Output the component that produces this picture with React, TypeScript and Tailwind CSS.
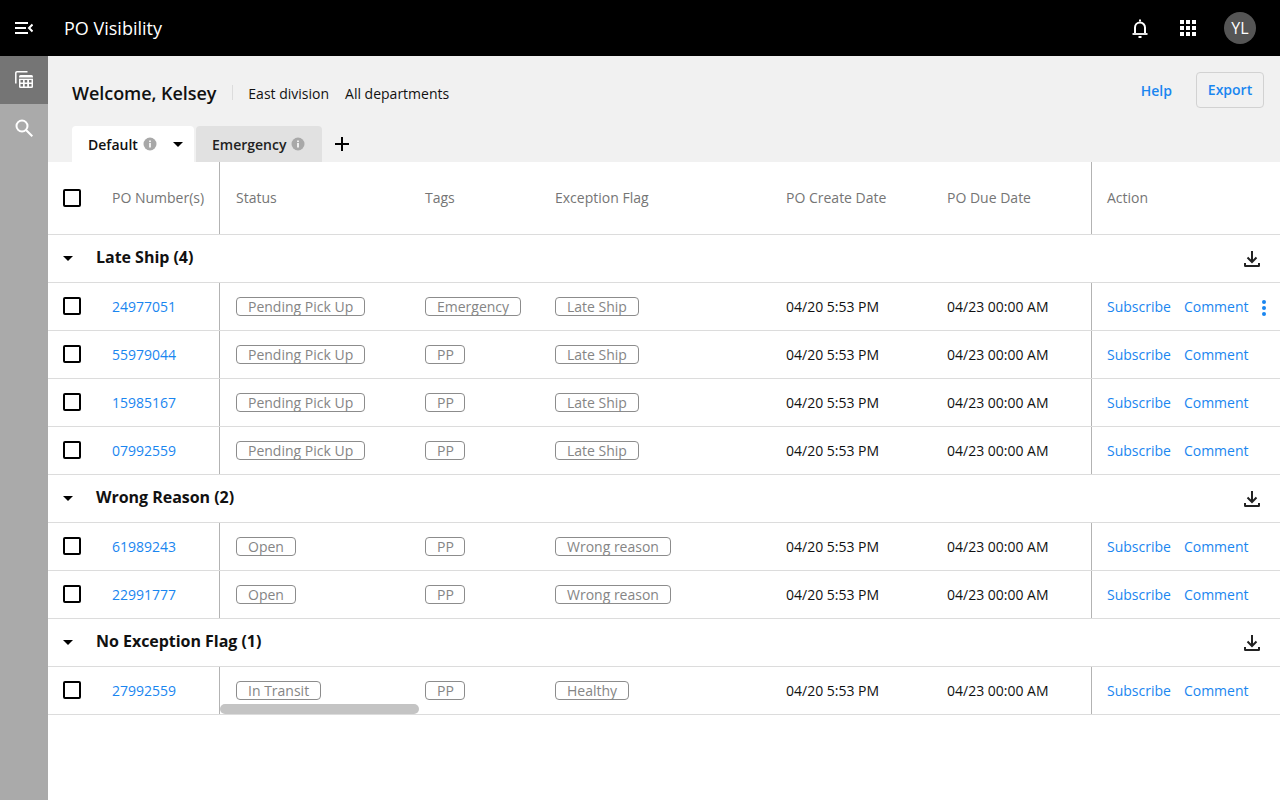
import React from "react";

const cols = "grid grid-cols-[172px_189px_130px_231px_161px_160px_189px]";

function Check({ up }: { up?: boolean }) {
  return <span className={`block w-[18px] h-[18px] border-2 border-black rounded-[2px] bg-white ${up ? "mb-px" : ""}`} />;
}

function Caret({ className = "" }: { className?: string }) {
  return (
    <svg width="10" height="5" viewBox="0 0 10 5" className={className}>
      <path d="M0 0h10L5 5z" fill="#000" />
    </svg>
  );
}

function Info() {
  return (
    <svg width="14" height="14" viewBox="0 0 14 14" className="ml-[5px]">
      <circle cx="7" cy="7" r="6.5" fill="#a8a8a8" />
      <rect x="6.2" y="6" width="1.6" height="4.5" fill="#fff" />
      <rect x="6.2" y="3.5" width="1.6" height="1.6" fill="#fff" />
    </svg>
  );
}

function Download() {
  return (
    <svg width="24" height="24" viewBox="0 0 24 24" fill="none" stroke="#222" strokeWidth="2">
      <path d="M12 4v10.500" />
      <path d="M7.500 10.500 12 15l4.500-4.500" />
      <path d="M5 16v2.800a.200.200 0 0 0 .200.200h13.600a.200.200 0 0 0 .200-.200V16" />
    </svg>
  );
}

function Tag({ children }: { children: React.ReactNode }) {
  return (
    <span className="inline-flex h-[19px] items-center pl-[11px] pr-[10.6px] rounded-[4px] border border-[#8c8c8c] text-[14px] text-[#858585] leading-none whitespace-nowrap">
      {children}
    </span>
  );
}

type Row = { po: string; status: string; tag: string; flag: string; menu?: boolean };

function DataRow({ po, status, tag, flag, menu }: Row) {
  return (
    <div className={`${cols} h-[48px] border-b border-[#dcdcdc] text-[14px] items-stretch`}>
      <div className="flex items-center border-r border-[#b3b3b3]">
        <span className="ml-[15px]"><Check up /></span>
        <a className="ml-[31px] text-[#1a86f0]">{po}</a>
      </div>
      <div className="flex items-center pl-4"><Tag>{status}</Tag></div>
      <div className="flex items-center pl-4"><Tag>{tag}</Tag></div>
      <div className="flex items-center pl-4"><Tag>{flag}</Tag></div>
      <div className="flex items-center pl-4 text-[#111]">04/20 5:53 PM</div>
      <div className="flex items-center pl-4 text-[#111]">04/23 00:00 AM</div>
      <div className="relative flex items-center border-l border-[#b3b3b3] pl-[15px] text-[#1a86f0] gap-[13px]">
        <span>Subscribe</span>
        <span>Comment</span>
        {menu && (
          <span className="absolute right-[14px] top-[17px] flex flex-col gap-[2px]">
            <span className="w-1 h-1 rounded-full bg-[#1a86f0]" />
            <span className="w-1 h-1 rounded-full bg-[#1a86f0]" />
            <span className="w-1 h-1 rounded-full bg-[#1a86f0]" />
          </span>
        )}
      </div>
    </div>
  );
}

function Group({ title }: { title: string }) {
  return (
    <div className="flex h-[48px] items-center border-b border-[#dcdcdc]">
      <Caret className="ml-[15px] mb-px" />
      <span className="ml-[23px] mb-1 text-[16px] font-bold text-[#111] tracking-[-0.03px]">{title}</span>
      <span className="ml-auto mr-4 flex"><Download /></span>
    </div>
  );
}

const Header = ({ children }: { children: React.ReactNode }) => (
  <div className="flex items-center pl-4 pb-[2px] text-[14px] text-[#757575]">{children}</div>
);

export default function App() {
  return (
    <div className="w-[1280px] h-[800px] overflow-hidden flex flex-col bg-white font-['Open_Sans',sans-serif]">
      <header className="h-14 shrink-0 bg-black flex items-center text-white">
        <div className="w-12 flex justify-center">
          <svg width="18" height="12" viewBox="0 0 18 12" fill="none" stroke="#fff" strokeWidth="2">
            <path d="M0 1h13M0 6h11M0 11h13" />
            <path d="M17.500 2.500 14 6l3.500 3.500" />
          </svg>
        </div>
        <div className="ml-4 text-[18px]">PO Visibility</div>
        <div className="ml-auto flex items-center">
          <svg width="16" height="19" viewBox="0 0 16 19" fill="none" stroke="#fff" strokeWidth="2">
            <path d="M3 14V8.500a5 5 0 0 1 10 0V14" />
            <path d="M.5 15h15" strokeWidth="1.800" />
            <path d="M8 .5v2" />
            <path d="M6.500 18h3" />
          </svg>
          <div className="ml-8 grid grid-cols-3 gap-[2px]">
            {Array.from({ length: 9 }).map((_, i) => (
              <span key={i} className="w-1 h-1 bg-white" />
            ))}
          </div>
          <div className="ml-7 mr-6 w-8 h-8 rounded-full bg-[#555] flex items-center justify-center text-[16px]">YL</div>
        </div>
      </header>
      <div className="flex flex-1 min-h-0">
        <aside className="w-12 shrink-0 bg-[#aaaaaa]">
          <div className="h-12 bg-[#757575] flex items-center justify-center">
            <svg width="18" height="17" viewBox="0 0 18 17" fill="none" className="mb-px">
              <path d="M.8 12.500V2A1.200 1.200 0 0 1 2 .8h10.500" stroke="#fff" strokeWidth="1.500" />
              <rect x="4" y="4" width="14" height="13" rx="1.500" fill="#fff" />
              <g fill="#757575">
                <rect x="4" y="6.500" width="14" height="1.200" />
                <rect x="5.500" y="9" width="2.500" height="2.500" />
                <rect x="9.700" y="9" width="2.500" height="2.500" />
                <rect x="14" y="9" width="2.500" height="2.500" />
                <rect x="5.500" y="13" width="2.500" height="2.500" />
                <rect x="9.700" y="13" width="2.500" height="2.500" />
                <rect x="14" y="13" width="2.500" height="2.500" />
              </g>
            </svg>
          </div>
          <div className="h-12 flex items-center justify-center">
            <svg width="18" height="18" viewBox="0 0 18 18" fill="none" stroke="#fff" strokeWidth="2">
              <circle cx="7" cy="7" r="5.500" />
              <path d="m10.800 10.800 6.500 6.500" />
            </svg>
          </div>
        </aside>
        <main className="flex-1 min-w-0 flex flex-col">
          <div className="h-[106px] shrink-0 bg-[#f1f1f1] flex flex-col">
            <div className="h-[70px] flex items-start">
              <div className="ml-6 mt-[23px] text-[18px] font-semibold text-[#111] leading-[28px] whitespace-nowrap tracking-[-0.05px]">Welcome, Kelsey</div>
              <span className="ml-4 mt-[29px] w-px h-[15px] bg-[#dcdcdc]" />
              <div className="ml-[15px] mt-[28px] text-[14px] text-[#111] leading-5">East division</div>
              <div className="ml-4 mt-[28px] text-[14px] text-[#111] leading-5">All departments</div>
              <div className="ml-auto mt-[25px] text-[14px] font-semibold text-[#1a86f0] leading-5">Help</div>
              <button className="ml-6 mr-4 mt-4 w-[68px] h-9 pb-[2px] rounded-[4px] border border-[#d2d2d2] text-[14px] font-semibold text-[#1a86f0]">Export</button>
            </div>
            <div className="h-[36px] flex items-stretch pl-6">
              <div className="w-[122px] bg-white rounded-t-[4px] flex items-center pl-4 text-[14px] font-semibold text-[#111]">
                Default
                <Info />
                <Caret className="ml-[16px]" />
              </div>
              <div className="ml-[2px] w-[126px] bg-[#e1e1e1] rounded-t-[4px] flex items-center pl-4 text-[14px] font-semibold text-[#222]">
                Emergency
                <Info />
              </div>
              <div className="ml-[12px] flex items-center">
                <svg width="16" height="16" viewBox="0 0 16 16" stroke="#000" strokeWidth="2">
                  <path d="M8 1v14M1 8h14" />
                </svg>
              </div>
            </div>
          </div>
          <div className="relative">
            <div className={`${cols} h-[73px] border-b border-[#dcdcdc]`}>
              <div className="flex items-center border-r border-[#b3b3b3] text-[14px] text-[#757575]">
                <span className="ml-[15px]"><Check /></span>
                <span className="ml-[31px] mb-[2px] whitespace-nowrap">PO Number(s)</span>
              </div>
              <Header>Status</Header>
              <Header>Tags</Header>
              <Header>Exception Flag</Header>
              <Header>PO Create Date</Header>
              <Header>PO Due Date</Header>
              <div className="flex items-center border-l border-[#b3b3b3] pl-[15px] pb-[2px] text-[14px] text-[#757575]">Action</div>
            </div>
            <Group title="Late Ship (4)" />
            <DataRow po="24977051" status="Pending Pick Up" tag="Emergency" flag="Late Ship" menu />
            <DataRow po="55979044" status="Pending Pick Up" tag="PP" flag="Late Ship" />
            <DataRow po="15985167" status="Pending Pick Up" tag="PP" flag="Late Ship" />
            <DataRow po="07992559" status="Pending Pick Up" tag="PP" flag="Late Ship" />
            <Group title="Wrong Reason (2)" />
            <DataRow po="61989243" status="Open" tag="PP" flag="Wrong reason" />
            <DataRow po="22991777" status="Open" tag="PP" flag="Wrong reason" />
            <Group title="No Exception Flag (1)" />
            <DataRow po="27992559" status="In Transit" tag="PP" flag="Healthy" />
            <span className="absolute left-[172px] top-[542px] w-[199px] h-[10px] rounded-full bg-[#c4c4c4]" />
          </div>
        </main>
      </div>
    </div>
  );
}
